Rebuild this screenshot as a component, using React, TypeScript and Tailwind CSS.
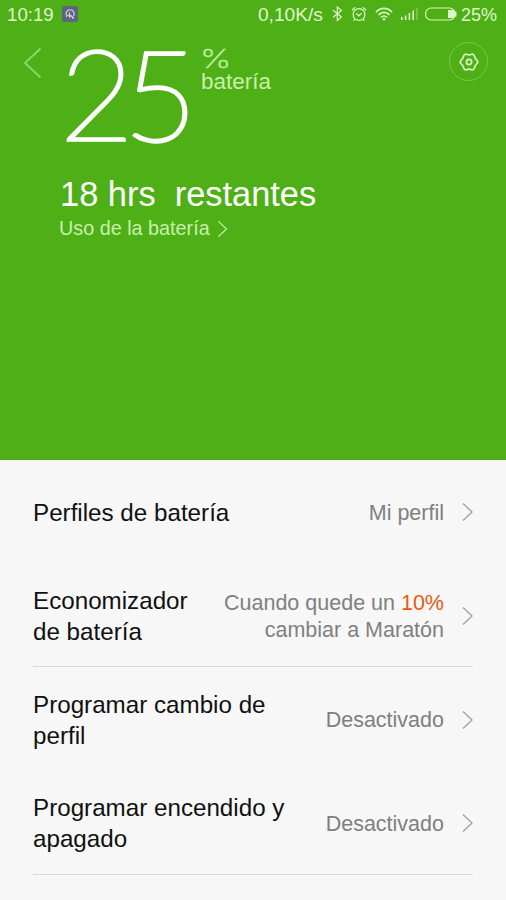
import React from "react";

function Chevron({ className }: { className?: string }) {
  return (
    <svg
      width="12"
      height="20"
      viewBox="0 0 12 20"
      fill="none"
      stroke="currentColor"
      strokeWidth="1.3"
      className={className}
    >
      <path d="M2 1.5L11 10L2 18.5" />
    </svg>
  );
}

function StatusBar() {
  return (
    <div className="flex h-[30px] items-center pl-[7px] pr-[9px] text-[#ddf8c8]">
      <span className="text-[18.7px] leading-[30px]">10:19</span>
      <svg
        width="16"
        height="16"
        viewBox="0 0 16 16"
        className="relative top-[-1px] ml-[8px]"
      >
        <rect width="16" height="16" rx="2" fill="#5c6480" />
        <g fill="none" stroke="#d9dbe8" strokeWidth="1.1">
          <path d="M4.2 9.5V6.5L6.2 4H10L12 6.5V10" />
          <path d="M4.2 10.5L6.5 9M7.5 6.5V11L9 9.5L11.5 12M10 12H12" />
        </g>
      </svg>

      <span className="ml-auto text-[19.2px] leading-[30px]">0,10K/s</span>
      <svg
        width="11"
        height="16"
        viewBox="0 0 11 16"
        fill="none"
        stroke="currentColor"
        strokeWidth="1.2"
        className="relative top-[-1px] ml-[9px]"
      >
        <path d="M1 4.3L9.5 11L5.3 14.5V1L9.5 4.5L1 11.2" />
      </svg>
      <svg
        width="16"
        height="16"
        viewBox="0 0 16 16"
        fill="none"
        stroke="currentColor"
        strokeWidth="1.2"
        className="relative top-[-1px] ml-[8px]"
      >
        <circle cx="8" cy="8.5" r="5.9" />
        <path d="M5.3 7.3L7.8 9.8L10.6 7.3" />
        <path d="M1 4.2L4.2 1.2M15 4.2L11.8 1.2M3.8 13L2.6 14.8M12.2 13L13.4 14.8" />
      </svg>
      <svg
        width="18"
        height="14"
        viewBox="0 0 18 14"
        fill="none"
        stroke="currentColor"
        strokeWidth="1.7"
        className="relative top-[-1px] ml-[8px]"
      >
        <path d="M1 5.2C5.5 0.2 12.5 0.2 17 5.2" />
        <path d="M3.5 7.9C6.6 4.5 11.4 4.5 14.5 7.9" />
        <path d="M6 10.4C7.8 8.5 10.2 8.5 12 10.4" />
        <circle cx="9" cy="12.3" r="1.2" fill="currentColor" stroke="none" />
      </svg>
      <svg
        width="17"
        height="12"
        viewBox="0 0 17 12"
        className="relative top-[-1px] ml-[8px]"
      >
        <g fill="currentColor">
          <rect x="0" y="9" width="1.6" height="3" />
          <rect x="3.8" y="7.5" width="1.6" height="4.5" />
          <rect x="7.6" y="5" width="1.6" height="7" />
          <rect x="11.4" y="2.5" width="1.6" height="9.5" />
          <rect x="15.2" y="0" width="1.4" height="12" opacity="0.4" />
        </g>
      </svg>
      <svg
        width="32"
        height="14"
        viewBox="0 0 32 14"
        className="relative top-[-1px] ml-[7px]"
      >
        <rect
          x="0.6"
          y="1"
          width="29.4"
          height="12"
          rx="5.5"
          fill="none"
          stroke="currentColor"
          strokeWidth="1.2"
        />
        <path d="M23 3H26.5A4 4 0 0 1 26.5 11H23Z" fill="currentColor" />
        <rect x="30" y="4.5" width="1.5" height="5" fill="currentColor" />
      </svg>
      <span className="ml-[4px] text-[18px] leading-[30px]">25%</span>
    </div>
  );
}

function Header() {
  return (
    <div className="h-[460px] bg-[#4faf17]">
      <StatusBar />
      <div className="flex h-[142px] items-start">
        <svg
          width="20"
          height="32"
          viewBox="0 0 20 32"
          fill="none"
          stroke="#8fd465"
          strokeWidth="2"
          className="ml-[23px] mt-[17px]"
        >
          <path d="M17.5 1.5L2 16L17.5 30.5" />
        </svg>
        <span className="ml-[17px] w-[140px] font-['Lato',sans-serif] text-[127px] font-extralight leading-[125px] tracking-[-10px] text-white [-webkit-text-stroke:3.4px_white]">
          25
        </span>
        <div className="flex flex-col items-start">
          <span className="mt-[16px] origin-left scale-x-[1.35] font-['Inter',sans-serif] text-[26px] font-extralight leading-[25px] text-[#b8ec98] [-webkit-text-stroke:0.5px_#b8ec98]">
            %
          </span>
          <span className="ml-px text-[22.5px] leading-[22px] text-[#c6f2aa]">
            batería
          </span>
        </div>
        <div className="ml-auto mr-[18px] mt-[12px] flex h-[39px] w-[39px] items-center justify-center rounded-full border border-[#78c74a]">
          <svg
            width="20"
            height="20"
            viewBox="0 0 20 20"
            fill="none"
            stroke="#d6f6c0"
            strokeWidth="1.7"
            strokeLinejoin="round"
          >
            <path d="M5.4 2.8Q6.2 1.9 7.4 2.2Q10 3.6 12.6 2.2Q13.8 1.9 14.6 2.8L15.4 4.2Q15.8 6.6 18.2 8.6Q19.2 10 18.2 11.4Q15.8 13.4 15.4 15.8L14.6 17.2Q13.8 18.1 12.6 17.8Q10 16.4 7.4 17.8Q6.2 18.1 5.4 17.2L4.6 15.8Q4.2 13.4 1.8 11.4Q0.8 10 1.8 8.6Q4.2 6.6 4.6 4.2Z" />
            <circle cx="10" cy="10" r="2.6" />
          </svg>
        </div>
      </div>
      <div className="pl-[59px]">
        <p className="ml-px whitespace-pre text-[34.4px] leading-[44px] text-white">
          18 hrs{"  "}restantes
        </p>
        <div className="flex items-center text-[#c6f2aa]">
          <span className="text-[19.8px] leading-[25px]">
            Uso de la batería
          </span>
          <Chevron className="ml-[6px] h-[18px]" />
        </div>
      </div>
    </div>
  );
}

export default function App() {
  return (
    <div className="h-[900px] w-[506px] overflow-hidden bg-[#f7f7f7] font-['Liberation_Sans',Arial,sans-serif]">
      <Header />
      <div className="px-[33px] text-[24.2px] leading-[31px] text-[#111111]">
        <div className="flex h-[104px] items-center">
          <span>Perfiles de batería</span>
          <span className="ml-auto pt-[2px] text-[21.5px] leading-[27px] text-[#808080]">
            Mi perfil
          </span>
          <Chevron className="ml-[17px] text-[#a0a0a0]" />
        </div>
        <div className="flex h-[103px] items-center border-b border-[#d8d8d8] pt-px">
          <span>
            Economizador
            <br />
            de batería
          </span>
          <span className="ml-auto pt-[2px] text-right text-[21.5px] leading-[27px] text-[#808080]">
            Cuando quede un <span className="text-[#e8590c]">10%</span>
            <br />
            cambiar a Maratón
          </span>
          <Chevron className="ml-[17px] text-[#a0a0a0]" />
        </div>
        <div className="flex h-[104px] items-center pt-px">
          <span>
            Programar cambio de
            <br />
            perfil
          </span>
          <span className="ml-auto pt-[2px] text-[21.5px] leading-[27px] text-[#808080]">
            Desactivado
          </span>
          <Chevron className="ml-[17px] text-[#a0a0a0]" />
        </div>
        <div className="flex h-[104px] items-center border-b border-[#d8d8d8] pt-px">
          <span>
            Programar encendido y
            <br />
            apagado
          </span>
          <span className="ml-auto pt-[2px] text-[21.5px] leading-[27px] text-[#808080]">
            Desactivado
          </span>
          <Chevron className="ml-[17px] text-[#a0a0a0]" />
        </div>
      </div>
    </div>
  );
}
